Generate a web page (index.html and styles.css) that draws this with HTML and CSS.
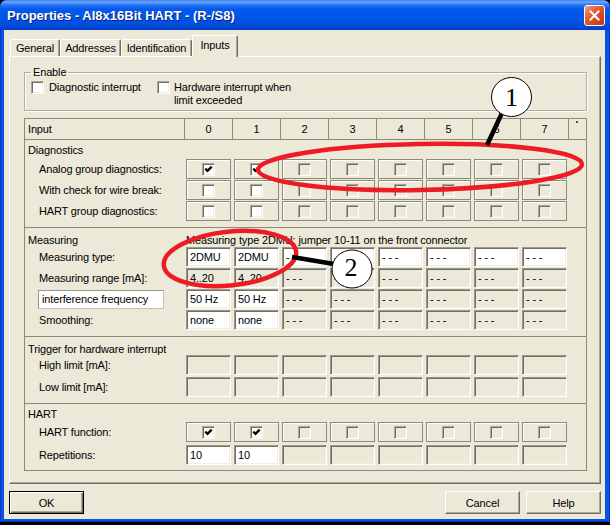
FILE: index.html
```html
<!DOCTYPE html>
<html>
<head>
<meta charset="utf-8">
<title>Properties</title>
<link rel="stylesheet" href="styles.css">
</head>
<body>
<div class="window">
  <div class="titlebar">
    <span class="title">Properties - AI8x16Bit HART - (R-/S8)</span>
    <span class="close"><svg width="11" height="11" viewBox="0 0 11 11"><path d="M1.5 1.5 L9.5 9.5 M9.5 1.5 L1.5 9.5" stroke="#fff" stroke-width="2" stroke-linecap="square"/></svg></span>
  </div>
  <div class="client">
    <div class="tabs">
      <div class="tab t1">General</div>
      <div class="tab t2">Addresses</div>
      <div class="tab t3">Identification</div>
      <div class="tab t4 active">Inputs</div>
    </div>
    <div class="panel">
      <fieldset class="group">
        <legend>Enable</legend>
        <div class="enable">
          <div class="opt o1"><span class="chk"></span><span class="optl">Diagnostic interrupt</span></div>
          <div class="opt o2"><span class="chk"></span><span class="optl">Hardware interrupt when<br>limit exceeded</span></div>
        </div>
      </fieldset>

      <div class="tbl">
        <div class="thead">
          <div class="th-label">Input</div>
          <div class="th">0</div><div class="th">1</div><div class="th">2</div><div class="th">3</div>
          <div class="th">4</div><div class="th">5</div><div class="th">6</div><div class="th">7</div>
          <div class="th-end"><span class="dot"></span></div>
        </div>

        <div class="sec s-diag">
          <div class="sec-label">Diagnostics</div>
          <div class="rows g1">
            <div class="row">
              <div class="rl">Analog group diagnostics:</div>
              <div class="c"><div class="box"><span class="chk"><svg class="tick" viewBox="0 0 9 9"><polyline points="1.3,3.6 3.5,5.8 7.7,1.6" /></svg></span></div></div>
              <div class="c"><div class="box"><span class="chk"><svg class="tick" viewBox="0 0 9 9"><polyline points="1.3,3.6 3.5,5.8 7.7,1.6" /></svg></span></div></div>
              <div class="c"><div class="box"><span class="chk dis"></span></div></div>
              <div class="c"><div class="box"><span class="chk dis"></span></div></div>
              <div class="c"><div class="box"><span class="chk dis"></span></div></div>
              <div class="c"><div class="box"><span class="chk dis"></span></div></div>
              <div class="c"><div class="box"><span class="chk dis"></span></div></div>
              <div class="c"><div class="box"><span class="chk dis"></span></div></div>
            </div>
            <div class="row">
              <div class="rl">With check for wire break:</div>
              <div class="c"><div class="box"><span class="chk"></span></div></div>
              <div class="c"><div class="box"><span class="chk"></span></div></div>
              <div class="c"><div class="box"><span class="chk dis"></span></div></div>
              <div class="c"><div class="box"><span class="chk dis"></span></div></div>
              <div class="c"><div class="box"><span class="chk dis"></span></div></div>
              <div class="c"><div class="box"><span class="chk dis"></span></div></div>
              <div class="c"><div class="box"><span class="chk dis"></span></div></div>
              <div class="c"><div class="box"><span class="chk dis"></span></div></div>
            </div>
            <div class="row">
              <div class="rl">HART group diagnostics:</div>
              <div class="c"><div class="box"><span class="chk"></span></div></div>
              <div class="c"><div class="box"><span class="chk"></span></div></div>
              <div class="c"><div class="box"><span class="chk dis"></span></div></div>
              <div class="c"><div class="box"><span class="chk dis"></span></div></div>
              <div class="c"><div class="box"><span class="chk dis"></span></div></div>
              <div class="c"><div class="box"><span class="chk dis"></span></div></div>
              <div class="c"><div class="box"><span class="chk dis"></span></div></div>
              <div class="c"><div class="box"><span class="chk dis"></span></div></div>
            </div>
          </div>
        </div>

        <div class="sec s-meas">
          <div class="sec-label"><span class="sl-name">Measuring</span><span class="sl-info">Measuring type 2DMU: jumper 10-11 on the front connector</span></div>
          <div class="rows g1">
            <div class="row">
              <div class="rl">Measuring type:</div>
              <div class="c"><div class="fld w">2DMU</div></div>
              <div class="c"><div class="fld w">2DMU</div></div>
              <div class="c"><div class="fld w">- - -</div></div>
              <div class="c"><div class="fld w">- - -</div></div>
              <div class="c"><div class="fld w">- - -</div></div>
              <div class="c"><div class="fld w">- - -</div></div>
              <div class="c"><div class="fld w">- - -</div></div>
              <div class="c"><div class="fld w">- - -</div></div>
            </div>
            <div class="row">
              <div class="rl">Measuring range [mA]:</div>
              <div class="c"><div class="fld">4..20</div></div>
              <div class="c"><div class="fld">4..20</div></div>
              <div class="c"><div class="fld">- - -</div></div>
              <div class="c"><div class="fld">- - -</div></div>
              <div class="c"><div class="fld">- - -</div></div>
              <div class="c"><div class="fld">- - -</div></div>
              <div class="c"><div class="fld">- - -</div></div>
              <div class="c"><div class="fld">- - -</div></div>
            </div>
            <div class="row">
              <div class="rl rl-box"><div class="iflabel">interference frequency</div></div>
              <div class="c"><div class="fld w">50 Hz</div></div>
              <div class="c"><div class="fld w">50 Hz</div></div>
              <div class="c"><div class="fld">- - -</div></div>
              <div class="c"><div class="fld">- - -</div></div>
              <div class="c"><div class="fld">- - -</div></div>
              <div class="c"><div class="fld">- - -</div></div>
              <div class="c"><div class="fld">- - -</div></div>
              <div class="c"><div class="fld">- - -</div></div>
            </div>
            <div class="row">
              <div class="rl">Smoothing:</div>
              <div class="c"><div class="fld w">none</div></div>
              <div class="c"><div class="fld w">none</div></div>
              <div class="c"><div class="fld">- - -</div></div>
              <div class="c"><div class="fld">- - -</div></div>
              <div class="c"><div class="fld">- - -</div></div>
              <div class="c"><div class="fld">- - -</div></div>
              <div class="c"><div class="fld">- - -</div></div>
              <div class="c"><div class="fld">- - -</div></div>
            </div>
          </div>
        </div>

        <div class="sec s-trig">
          <div class="sec-label">Trigger for hardware interrupt</div>
          <div class="rows g2">
            <div class="row">
              <div class="rl">High limit [mA]:</div>
              <div class="c"><div class="fld"></div></div>
              <div class="c"><div class="fld"></div></div>
              <div class="c"><div class="fld"></div></div>
              <div class="c"><div class="fld"></div></div>
              <div class="c"><div class="fld"></div></div>
              <div class="c"><div class="fld"></div></div>
              <div class="c"><div class="fld"></div></div>
              <div class="c"><div class="fld"></div></div>
            </div>
            <div class="row">
              <div class="rl">Low limit [mA]:</div>
              <div class="c"><div class="fld"></div></div>
              <div class="c"><div class="fld"></div></div>
              <div class="c"><div class="fld"></div></div>
              <div class="c"><div class="fld"></div></div>
              <div class="c"><div class="fld"></div></div>
              <div class="c"><div class="fld"></div></div>
              <div class="c"><div class="fld"></div></div>
              <div class="c"><div class="fld"></div></div>
            </div>
          </div>
        </div>

        <div class="sec s-hart">
          <div class="sec-label">HART</div>
          <div class="rows g3">
            <div class="row">
              <div class="rl">HART function:</div>
              <div class="c"><div class="box"><span class="chk"><svg class="tick" viewBox="0 0 9 9"><polyline points="1.3,3.6 3.5,5.8 7.7,1.6" /></svg></span></div></div>
              <div class="c"><div class="box"><span class="chk"><svg class="tick" viewBox="0 0 9 9"><polyline points="1.3,3.6 3.5,5.8 7.7,1.6" /></svg></span></div></div>
              <div class="c"><div class="box"><span class="chk dis"></span></div></div>
              <div class="c"><div class="box"><span class="chk dis"></span></div></div>
              <div class="c"><div class="box"><span class="chk dis"></span></div></div>
              <div class="c"><div class="box"><span class="chk dis"></span></div></div>
              <div class="c"><div class="box"><span class="chk dis"></span></div></div>
              <div class="c"><div class="box"><span class="chk dis"></span></div></div>
            </div>
            <div class="row">
              <div class="rl">Repetitions:</div>
              <div class="c"><div class="fld w">10</div></div>
              <div class="c"><div class="fld w">10</div></div>
              <div class="c"><div class="fld"></div></div>
              <div class="c"><div class="fld"></div></div>
              <div class="c"><div class="fld"></div></div>
              <div class="c"><div class="fld"></div></div>
              <div class="c"><div class="fld"></div></div>
              <div class="c"><div class="fld"></div></div>
            </div>
          </div>
        </div>
      </div>
    </div>
    <div class="buttons">
      <div class="btn def">OK</div>
      <div class="btn cancel">Cancel</div>
      <div class="btn help">Help</div>
    </div>
  </div>
</div>

<svg class="overlay" width="610" height="525" viewBox="0 0 610 525">
  <ellipse cx="420" cy="167" rx="162" ry="23" fill="none" stroke="#ED1C24" stroke-width="4.5" transform="rotate(-1 420 167)"/>
  <line x1="502" y1="113" x2="487" y2="145" stroke="#000" stroke-width="4.5"/>
  <ellipse cx="511.5" cy="97" rx="20" ry="19.5" fill="#fff" stroke="#000" stroke-width="1"/>
  <text x="511.5" y="106" class="num">1</text>
  <ellipse cx="230" cy="258.5" rx="66.5" ry="27" fill="none" stroke="#ED1C24" stroke-width="4.5" transform="rotate(-6 230 258.5)"/>
  <line x1="292" y1="257" x2="334" y2="264" stroke="#000" stroke-width="4.5"/>
  <ellipse cx="352" cy="269" rx="20" ry="19" fill="#fff" stroke="#000" stroke-width="1"/>
  <text x="351" y="276" class="num">2</text>
</svg>
</body>
</html>
```
FILE: styles.css
```css
* { box-sizing: border-box; }
html, body { margin: 0; padding: 0; }
body {
  width: 610px;
  height: 525px;
  background: #000;
  position: relative;
  overflow: hidden;
  font-family: "Liberation Sans", Arial, sans-serif;
  font-size: 11px;
  letter-spacing: -0.15px;
  color: #000;
}
.window {
  width: 610px;
  height: 522px;
  display: flex;
  flex-direction: column;
  background: #0A52E2;
  box-shadow: inset 1px 0 0 #0832C8, inset -1px 0 0 #0832C8, inset 0 -1px 0 #0832C8;
  border-radius: 7px 7px 0 0;
}
.titlebar {
  height: 30px;
  flex: none;
  display: flex;
  align-items: center;
  justify-content: space-between;
  padding: 0 5px 0 7px;
  border-radius: 7px 7px 0 0;
  background: linear-gradient(to bottom, #3A81F3 0px, #6BA6FC 2px, #2A75F5 5px, #0359EC 9px, #0055E6 18px, #0150E0 24px, #0044D0 28px, #003CC2 30px);
}
.title {
  color: #fff;
  font-weight: bold;
  font-size: 13px;
  letter-spacing: 0;
  text-shadow: 1px 1px 0 #0F1F6E;
  padding-top: 1px;
}
.close {
  width: 21px;
  height: 21px;
  border: 1px solid #fff;
  border-radius: 3px;
  background: linear-gradient(135deg, #F3A287 0%, #E35E34 40%, #CF4418 75%, #B8350F 100%);
  display: flex;
  align-items: center;
  justify-content: center;
}
.close svg { display: block; }
.client {
  width: 601px;
  height: 489px;
  margin-left: 4px;
  background: #ECE9D8;
  display: flex;
  flex-direction: column;
}
.tabs {
  height: 26px;
  flex: none;
  display: flex;
  align-items: flex-end;
  padding-left: 6px;
}
.tab {
  height: 17px;
  border-top: 1px solid #fff;
  border-left: 1px solid #fff;
  border-right: 1px solid #716F64;
  box-shadow: inset -1px 0 0 #ACA899;
  border-radius: 2px 2px 0 0;
  text-align: center;
  line-height: 16px;
  background: #ECE9D8;
  white-space: nowrap;
}
.t1 { width: 50px; }
.t2 { width: 61px; }
.t3 { width: 71px; }
.t4 { width: 46px; }
.tab.active {
  height: 22px;
  margin-bottom: -1px;
  padding-top: 1px;
  position: relative;
  z-index: 1;
}
.panel {
  flex: none;
  margin-left: 5px;
  width: 592px;
  height: 428px;
  border-top: 1px solid #fff;
  border-left: 1px solid #fff;
  border-right: 1px solid #716F64;
  border-bottom: 1px solid #716F64;
  box-shadow: inset -1px -1px 0 #ACA899;
  padding-left: 14px;
}
.group {
  margin: 9px 0 0 0;
  width: 563px;
  padding: 2px 6px 3px 6px;
  border: 1px solid #B2AF9F;
  box-shadow: inset 1px 1px 0 #fff, 1px 1px 0 #fff;
  min-width: 0;
}
.group legend {
  padding: 0 2px;
  line-height: 13px;
  font-size: 11px;
}
.enable { display: flex; }
.opt { display: flex; align-items: flex-start; gap: 5px; line-height: 13px; }
.o1 { width: 126px; }
.o2 { gap: 4px; }
.opt .chk { flex: none; }
.chk {
  display: block;
  width: 13px;
  height: 13px;
  border: 1px solid;
  border-color: #ACA899 #fff #fff #ACA899;
  box-shadow: inset 1px 1px 0 #716F64, inset -1px -1px 0 #F1EFE2;
  background: #fff;
  padding: 1px;
}
.chk.dis { background: #ECE9D8; }
.tick {
  display: block;
  width: 9px;
  height: 9px;
  fill: none;
  stroke: #000;
  stroke-width: 2.3;
}
.tbl {
  margin-top: 7px;
  width: 563px;
  border: 1px solid #8D8A7B;
}
.thead {
  display: flex;
  height: 21px;
  border-bottom: 1px solid #8D8A7B;
}
.th-label { width: 159px; padding-left: 3px; line-height: 20px; }
.th { width: 48px; border-left: 1px solid #8D8A7B; text-align: center; line-height: 20px; }
.th-end { width: 18px; border-left: 1px solid #8D8A7B; }
.dot { display: block; width: 2px; height: 2px; background: #555; margin: 2px 0 0 7px; }
.sec { border-bottom: 1px solid #8D8A7B; }
.sec:last-child { border-bottom: none; }
.sec-label {
  display: flex;
  padding-left: 3px;
  line-height: 14px;
  white-space: nowrap;
}
.sl-name { width: 156px; }
.sl-info { padding-left: 2px; }
.s-diag .sec-label { height: 19px; padding-top: 3px; }
.s-meas .sec-label { height: 19px; padding-top: 5px; }
.s-trig .sec-label { height: 18px; padding-top: 5px; }
.s-hart .sec-label { height: 18px; padding-top: 3px; }
.s-diag { padding-bottom: 6px; }
.s-meas { padding-bottom: 6px; }
.s-trig { padding-bottom: 6px; }
.s-hart { padding-bottom: 5px; }
.rows { display: flex; flex-direction: column; }
.g1 { gap: 1px; }
.g2 { gap: 2px; }
.g3 { gap: 3px; }
.row { display: flex; height: 20px; }
.rl { width: 159px; padding-left: 14px; line-height: 20px; white-space: nowrap; }
.rl-box { padding-left: 13px; }
.iflabel {
  width: 126px;
  height: 19px;
  margin-top: 1px;
  background: #fff;
  border: 1px solid #C4C1B2;
  border-top-color: #9A9789;
  border-left-color: #9A9789;
  padding-left: 3px;
  line-height: 17px;
}
.c { width: 48px; padding-left: 2px; }
.box {
  width: 45px;
  height: 20px;
  border: 1px solid #8D8A7B;
  box-shadow: inset 1px 1px 0 #fff;
  display: flex;
  align-items: center;
  justify-content: center;
}
.fld {
  width: 45px;
  height: 20px;
  border: 1px solid;
  border-color: #9D9A8C #fff #fff #9D9A8C;
  box-shadow: inset 1px 1px 0 #716F64, inset -1px -1px 0 #F1EFE2;
  background: #ECE9D8;
  padding-left: 3px;
  line-height: 18px;
  white-space: nowrap;
  overflow: hidden;
}
.fld.w { background: #fff; }
.buttons {
  flex: none;
  margin-top: 7px;
  height: 23px;
  display: flex;
  padding: 0 4px 0 5px;
}
.btn {
  width: 75px;
  height: 23px;
  border: 1px solid;
  border-color: #fff #716F64 #716F64 #fff;
  box-shadow: inset -1px -1px 0 #ACA899;
  background: #ECE9D8;
  display: flex;
  align-items: center;
  justify-content: center;
}
.btn.def {
  border: 1px solid #000;
  box-shadow: inset 1px 1px 0 #fff, inset -1px -1px 0 #716F64, inset -2px -2px 0 #ACA899;
}
.cancel { margin-left: auto; }
.help { margin-left: 6px; }
.overlay {
  position: absolute;
  left: 0;
  top: 0;
  pointer-events: none;
}
.num {
  font-family: "Liberation Serif", "Times New Roman", serif;
  font-size: 26px;
  text-anchor: middle;
  fill: #000;
  letter-spacing: 0;
}
```
